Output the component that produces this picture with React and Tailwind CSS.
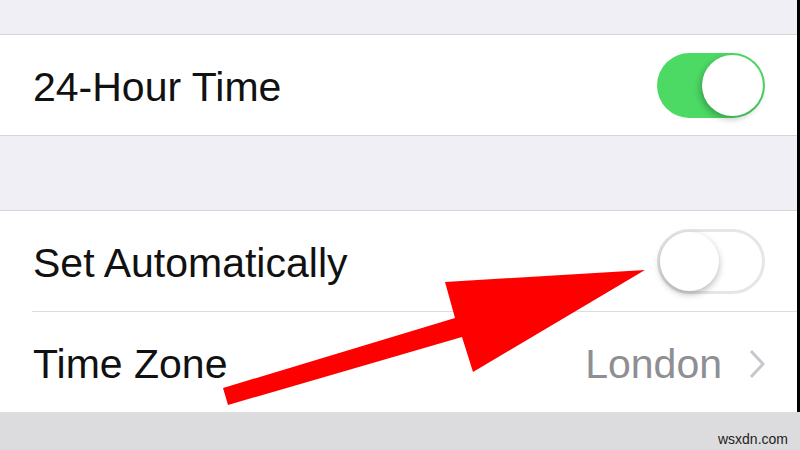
import React from "react";

const Toggle = ({ on }) => {
  if (on) {
    return (
      <div className="w-[108px] h-[65px] rounded-full bg-[#4cd964] flex items-center justify-end p-[2px]">
        <div className="w-[61px] h-[61px] rounded-full bg-white shadow-[-2px_3px_6px_rgba(0,0,0,0.25)]" />
      </div>
    );
  }
  return (
    <div className="w-[108px] h-[65px] rounded-full bg-white border-[3px] border-[#e6e6ea] flex items-center justify-start">
      <div className="w-[59px] h-[59px] rounded-full bg-white shadow-[0_3px_7px_rgba(0,0,0,0.28)]" />
    </div>
  );
};

const Row = ({ label, children }) => (
  <div className="h-[100px] bg-white flex items-center justify-between pl-[33px] pr-[32px]">
    <span className="text-[41px] text-[#111] leading-none pt-[5px]">{label}</span>
    {children}
  </div>
);

export default function App() {
  return (
    <div
      className="relative w-[800px] h-[450px] overflow-hidden bg-[#efeff4]"
      style={{ fontFamily: '"Liberation Sans", Arial, sans-serif' }}
    >
      <div className="flex">
        <div className="flex-1 flex flex-col">
          <div className="h-[34px] bg-[#f0eff5]" />
          <div className="h-px bg-[#d6d5da]" />
          <Row label="24-Hour Time">
            <Toggle on />
          </Row>
          <div className="h-px bg-[#d6d5da]" />
          <div className="h-[74px] bg-[#f0eff5]" />
          <div className="h-px bg-[#d6d5da]" />
          <Row label="Set Automatically">
            <Toggle on={false} />
          </Row>
          <div className="h-px bg-white pl-[32px]">
            <div className="h-px bg-[#dcdce0]" />
          </div>
          <Row label="Time Zone">
            <div className="flex items-center gap-[27px]">
              <span className="text-[41px] leading-none text-[#8e8e93] pt-[5px]">London</span>
              <svg width="16" height="30" viewBox="0 0 16 30" className="mt-[4px]">
                <path d="M2 2 L14 15 L2 28" fill="none" stroke="#c7c7cc" strokeWidth="3" />
              </svg>
            </div>
          </Row>
        </div>
        <div className="w-[3px] bg-black" />
      </div>
      <div className="h-[38px] bg-[#dcdcde] flex items-end justify-end pr-[12px] pb-[4px]">
        <span className="text-[14px] text-[#222] leading-none">wsxdn.com</span>
      </div>

      <svg
        className="absolute inset-0 pointer-events-none"
        width="800"
        height="450"
        viewBox="0 0 800 450"
      >
        <polygon
          points="223,388 455,318 445,282 645,270 473,372 462,337 228,405"
          fill="#ff0000"
        />
      </svg>
    </div>
  );
}
